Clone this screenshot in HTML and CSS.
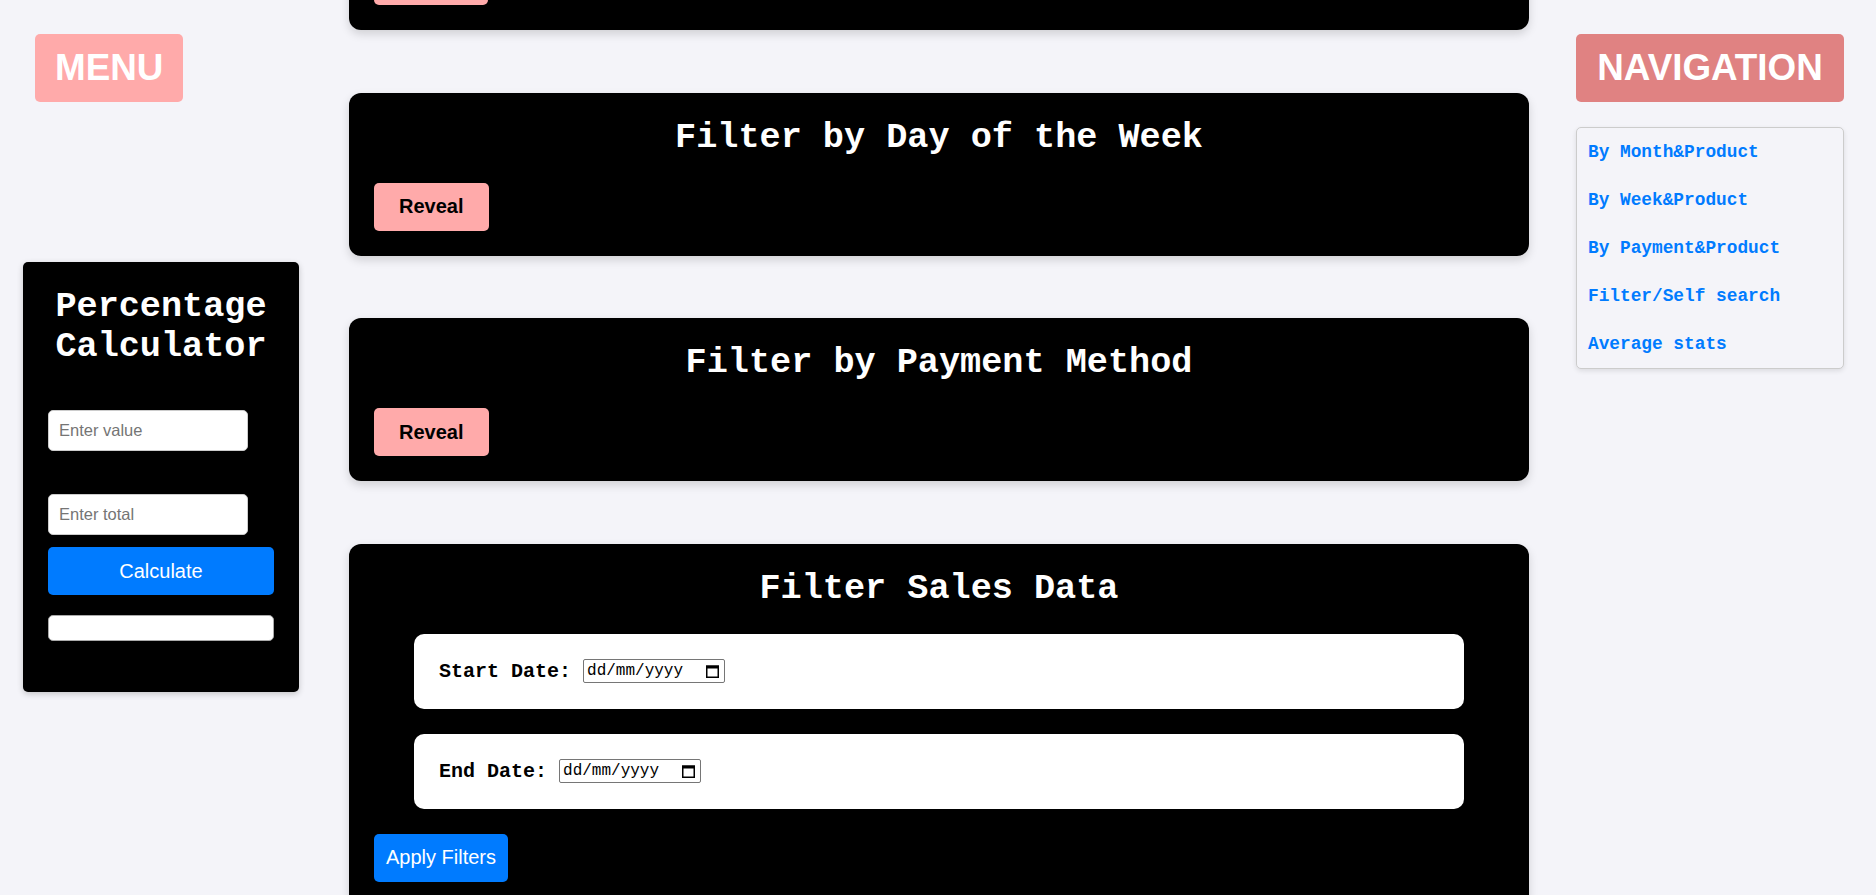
FILE: index.html
```html
<!DOCTYPE html>
<html lang="en-GB">
<head>
<meta charset="utf-8">
<title>Sales Dashboard</title>
<link rel="stylesheet" href="styles.css">
</head>
<body>
<div class="page">
  <aside class="left-col">
    <button class="menu-btn">MENU</button>
    <div class="calc">
      <h2 class="calc-title">Percentage Calculator</h2>
      <input class="calc-input calc-value" type="text" placeholder="Enter value">
      <input class="calc-input calc-total" type="text" placeholder="Enter total">
      <button class="calc-btn">Calculate</button>
      <div class="calc-result"></div>
    </div>
  </aside>

  <main class="main-col">
    <section class="card card-partial">
      <div class="reveal-stub"></div>
    </section>
    <section class="card">
      <h2 class="card-title">Filter by Day of the Week</h2>
      <button class="reveal-btn">Reveal</button>
    </section>
    <section class="card">
      <h2 class="card-title">Filter by Payment Method</h2>
      <button class="reveal-btn">Reveal</button>
    </section>
    <section class="card">
      <h2 class="card-title">Filter Sales Data</h2>
      <div class="field">
        <label class="field-label">Start Date:</label>
        <span class="date-box">
          <span class="date-text">dd/mm/yyyy</span>
          <svg class="date-icon" width="13" height="14" viewBox="0 0 13 14">
            <rect x="0.75" y="2.25" width="11.5" height="11" fill="none" stroke="#000" stroke-width="1.5"/>
            <rect x="0" y="1.5" width="13" height="3" fill="#000"/>
          </svg>
        </span>
      </div>
      <div class="field">
        <label class="field-label">End Date:</label>
        <span class="date-box">
          <span class="date-text">dd/mm/yyyy</span>
          <svg class="date-icon" width="13" height="14" viewBox="0 0 13 14">
            <rect x="0.75" y="2.25" width="11.5" height="11" fill="none" stroke="#000" stroke-width="1.5"/>
            <rect x="0" y="1.5" width="13" height="3" fill="#000"/>
          </svg>
        </span>
      </div>
      <button class="apply-btn">Apply Filters</button>
    </section>
  </main>

  <aside class="right-col">
    <button class="nav-btn">NAVIGATION</button>
    <nav class="nav-box">
      <a class="nav-link" href="#">By Month&amp;Product</a>
      <a class="nav-link" href="#">By Week&amp;Product</a>
      <a class="nav-link" href="#">By Payment&amp;Product</a>
      <a class="nav-link" href="#">Filter/Self search</a>
      <a class="nav-link" href="#">Average stats</a>
    </nav>
  </aside>
</div>
</body>
</html>
```

FILE: styles.css
```css
html, body {
  margin: 0;
  padding: 0;
  overflow: hidden;
}

body {
  background: #f4f4f9;
  font-family: "Liberation Mono", "Courier New", monospace;
  width: 1876px;
  height: 895px;
}

.page {
  display: flex;
  align-items: flex-start;
}

/* ---------- left column ---------- */
.left-col {
  width: 349px;
  box-sizing: border-box;
  padding: 34px 0 0 23px;
  display: flex;
  flex-direction: column;
  align-items: flex-start;
}

.menu-btn {
  margin-left: 12px;
  height: 68px;
  padding: 0 20px;
  border: none;
  border-radius: 5px;
  background: #ffaaaa;
  color: #fff;
  font-family: "Liberation Sans", Arial, sans-serif;
  font-weight: bold;
  font-size: 36.8px;
  line-height: 68px;
}

.calc {
  margin-top: 160px;
  width: 276px;
  box-sizing: border-box;
  padding: 25px 25px 51px;
  background: #000;
  border-radius: 5px;
  box-shadow: 0 2px 6px rgba(0, 0, 0, 0.2);
}

.calc-title {
  margin: 0;
  color: #fff;
  font-size: 35.2px;
  line-height: 40px;
  font-weight: bold;
  text-align: center;
}

.calc-input {
  display: block;
  box-sizing: border-box;
  width: 200px;
  height: 41px;
  padding: 0 10px;
  border: 1px solid #ccc;
  border-radius: 5px;
  background: #fff;
  font-family: "Liberation Sans", Arial, sans-serif;
  font-size: 16.5px;
  color: #333;
}

.calc-input::placeholder {
  color: #757575;
}

.calc-value {
  margin-top: 43px;
}

.calc-total {
  margin-top: 43px;
}

.calc-btn {
  display: block;
  margin-top: 12px;
  width: 100%;
  height: 48px;
  border: none;
  border-radius: 5px;
  background: #007bff;
  color: #fff;
  font-family: "Liberation Sans", Arial, sans-serif;
  font-size: 20px;
}

.calc-result {
  margin-top: 20px;
  height: 26px;
  box-sizing: border-box;
  border: 1px solid #aaa;
  border-radius: 5px;
  background: #fff;
}

/* ---------- main column ---------- */
.main-col {
  width: 1180px;
  margin-top: -68px;
  display: flex;
  flex-direction: column;
  gap: 62.5px;
}

.card {
  background: #000;
  border-radius: 12px;
  padding: 25px;
  box-shadow: 0 4px 10px rgba(0, 0, 0, 0.15);
}

.reveal-stub {
  width: 114px;
  height: 48px;
  border-radius: 5px;
  background: #ffaaaa;
}

.card-title {
  margin: 0 0 25px;
  color: #fff;
  font-size: 35.2px;
  line-height: 40px;
  font-weight: bold;
  text-align: center;
}

.reveal-btn {
  display: block;
  height: 48px;
  padding: 0 25px;
  border: none;
  border-radius: 5px;
  background: #ffaaaa;
  color: #000;
  font-family: "Liberation Sans", Arial, sans-serif;
  font-weight: bold;
  font-size: 20px;
}

.field {
  display: flex;
  align-items: center;
  height: 75px;
  margin: 0 40px 25px;
  padding: 0 25px;
  background: #fff;
  border-radius: 10px;
}

.field-label {
  font-weight: bold;
  font-size: 20px;
  color: #000;
  margin-right: 12px;
}

.date-box {
  display: inline-flex;
  align-items: center;
  justify-content: space-between;
  box-sizing: border-box;
  width: 142px;
  height: 24.5px;
  padding: 0 5px 0 3px;
  border: 1px solid #767676;
  border-radius: 2px;
  background: #fff;
}

.date-text {
  font-family: "Liberation Mono", "Courier New", monospace;
  font-size: 16px;
  color: #000;
}

.date-icon {
  display: block;
}

.apply-btn {
  display: block;
  height: 48px;
  padding: 0 12px;
  border: none;
  border-radius: 5px;
  background: #007bff;
  color: #fff;
  font-family: "Liberation Sans", Arial, sans-serif;
  font-size: 20px;
}

/* ---------- right column ---------- */
.right-col {
  width: 347px;
  box-sizing: border-box;
  padding: 34px 0 0 47px;
  display: flex;
  flex-direction: column;
  align-items: flex-start;
}

.nav-btn {
  height: 68px;
  width: 268px;
  padding: 0 20px;
  border: none;
  border-radius: 5px;
  background: #e08282;
  color: #fff;
  font-family: "Liberation Sans", Arial, sans-serif;
  font-weight: bold;
  font-size: 36.8px;
  line-height: 68px;
  white-space: nowrap;
}

.nav-box {
  margin-top: 25px;
  width: 266px;
  border: 1px solid #ccc;
  border-radius: 5px;
  background: #f4f4f9;
  box-shadow: 0 2px 5px rgba(0, 0, 0, 0.1);
}

.nav-link {
  display: block;
  padding: 14px 11px;
  line-height: 20px;
  font-size: 17.8px;
  font-weight: bold;
  color: #007bff;
  text-decoration: none;
}
```
